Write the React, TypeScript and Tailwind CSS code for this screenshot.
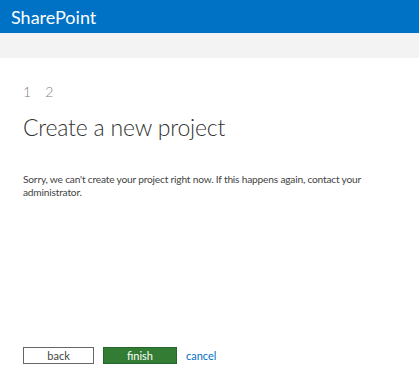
export default function App() {
  return (
    <div className="flex flex-col h-[383px] w-full bg-white font-['Lato',sans-serif]">
      {/* Suite bar */}
      <div className="h-[33px] bg-[#0072c6] flex items-center px-[11px]">
        <span className="text-white text-[18px] leading-none">SharePoint</span>
      </div>
      <div className="h-[25px] bg-[#f3f3f3]" />

      {/* Content */}
      <div className="flex flex-col flex-1 px-[23px]">
        <div className="flex gap-[14px] mt-[27px] text-[14px] leading-none text-[#808080] font-light">
          <span>1</span>
          <span>2</span>
        </div>
        <h1 className="mt-[17px] text-[23px] leading-none font-light text-[#333] tracking-[-0.2px]">Create a new project</h1>
        <p className="mt-[34px] text-[10.2px] leading-[13px] text-[#444] tracking-[-0.2px] max-w-[345px]">
          Sorry, we can't create your project right now. If this happens again, contact your administrator.
        </p>

        <div className="mt-auto mb-[19px] flex items-center gap-[9px]">
          <button className="w-[71px] h-[17px] border border-[#666] bg-white text-[11px] leading-none text-[#444]">
            back
          </button>
          <button className="w-[74px] h-[17px] border border-[#25662a] bg-[#327d33] text-[11px] leading-none text-white">
            finish
          </button>
          <a className="text-[11px] leading-none text-[#0072c6]">cancel</a>
        </div>
      </div>
    </div>
  );
}
